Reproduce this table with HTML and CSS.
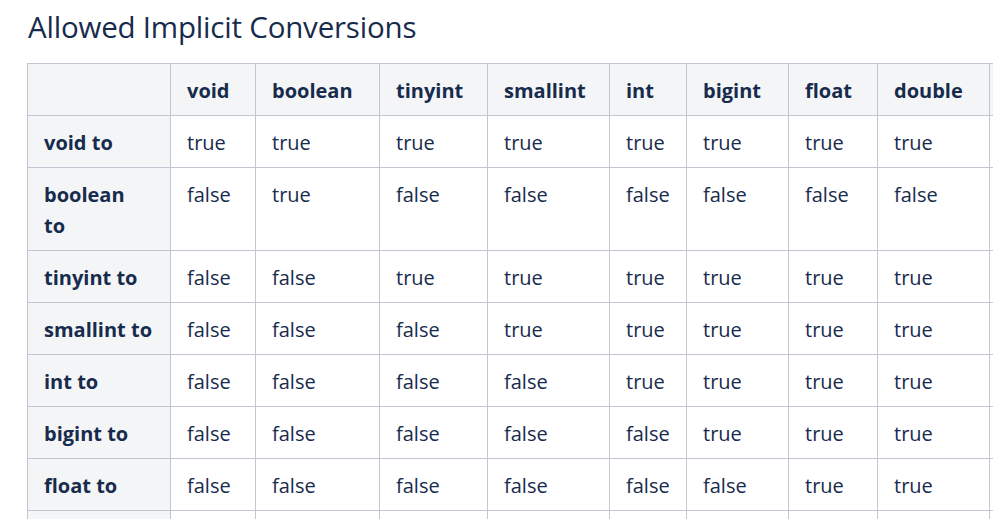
FILE: index.html
```html
<!DOCTYPE html>
<html lang="en">
<head>
<meta charset="utf-8">
<title>Allowed Implicit Conversions</title>
<link rel="stylesheet" href="styles.css">
</head>
<body>
<main class="page">
  <h2 class="title">Allowed Implicit Conversions</h2>
  <div class="table-wrap">
    <table class="conv">
      <thead>
        <tr>
          <th class="c1"></th><th class="c2">void</th><th class="c3">boolean</th><th class="c4">tinyint</th><th class="c5">smallint</th><th class="c6">int</th><th class="c7">bigint</th><th class="c8">float</th><th class="c9">double</th><th class="c10"></th>
        </tr>
      </thead>
      <tbody>
        <tr><th>void to</th><td>true</td><td>true</td><td>true</td><td>true</td><td>true</td><td>true</td><td>true</td><td>true</td><td></td></tr>
        <tr><th>boolean<br>to</th><td>false</td><td>true</td><td>false</td><td>false</td><td>false</td><td>false</td><td>false</td><td>false</td><td></td></tr>
        <tr><th>tinyint to</th><td>false</td><td>false</td><td>true</td><td>true</td><td>true</td><td>true</td><td>true</td><td>true</td><td></td></tr>
        <tr><th>smallint to</th><td>false</td><td>false</td><td>false</td><td>true</td><td>true</td><td>true</td><td>true</td><td>true</td><td></td></tr>
        <tr><th>int to</th><td>false</td><td>false</td><td>false</td><td>false</td><td>true</td><td>true</td><td>true</td><td>true</td><td></td></tr>
        <tr><th>bigint to</th><td>false</td><td>false</td><td>false</td><td>false</td><td>false</td><td>true</td><td>true</td><td>true</td><td></td></tr>
        <tr><th>float to</th><td>false</td><td>false</td><td>false</td><td>false</td><td>false</td><td>false</td><td>true</td><td>true</td><td></td></tr>
        <tr><th>double to</th><td>false</td><td>false</td><td>false</td><td>false</td><td>false</td><td>false</td><td>false</td><td>true</td><td></td></tr>
      </tbody>
    </table>
  </div>
</main>
</body>
</html>
```

FILE: styles.css
```css
html, body {
  margin: 0;
  padding: 0;
  background: #ffffff;
  overflow: hidden;
}

body {
  font-family: "Open Sans", "Noto Sans", "Liberation Sans", sans-serif;
  color: #172b4d;
}

.page {
  padding: 0 0 0 27px;
}

.title {
  margin: 0;
  padding: 8px 0 0 1px;
  font-size: 29.5px;
  font-weight: 400;
  line-height: 38px;
  letter-spacing: -0.2px;
}

.table-wrap {
  margin-top: 17px;
  overflow: hidden;
}

.conv {
  border-collapse: separate;
  border-spacing: 0;
  table-layout: fixed;
  width: 1100px;
  border-left: 1px solid #c1c7d0;
  border-top: 1px solid #c1c7d0;
  font-size: 20px;
  line-height: 31px;
}

.conv th,
.conv td {
  box-sizing: border-box;
  border-right: 1px solid #c1c7d0;
  border-bottom: 1px solid #c1c7d0;
  padding: 11px 16px 9px;
  text-align: left;
  vertical-align: top;
}

.conv th {
  background: #f4f5f7;
  font-weight: 700;
}

.conv td {
  background: #ffffff;
  font-weight: 400;
}

.c1 { width: 143px; }
.c2 { width: 85px; }
.c3 { width: 124px; }
.c4 { width: 108px; }
.c5 { width: 122px; }
.c6 { width: 77px; }
.c7 { width: 102px; }
.c8 { width: 89px; }
.c9 { width: 112px; }
.c10 { width: 137px; }
```
